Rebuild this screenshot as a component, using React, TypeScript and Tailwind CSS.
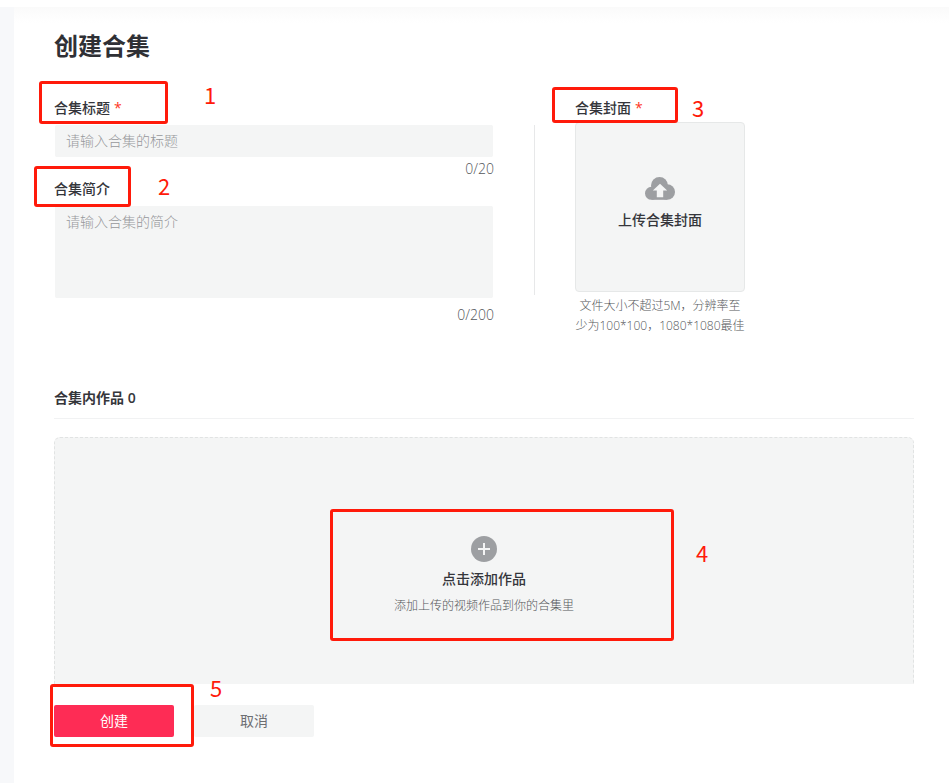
import React, { useState } from 'react';

const TITLE_MAX = 20;
const INTRO_MAX = 200;

function CloudUploadIcon() {
  return (
    <svg width="30" height="23" viewBox="0 0 30 23" aria-hidden="true">
      <g fill="#9d9fa2">
        <circle cx="6.5" cy="16.3" r="6.5" />
        <circle cx="14.5" cy="8.6" r="8.5" />
        <circle cx="22.2" cy="15" r="7.8" />
        <rect x="6.5" y="10" width="15.7" height="12.8" />
      </g>
      <path d="M15 6.8L22.2 13.4H18.2V20.3H11.8V13.4H7.8Z" fill="#f4f5f5" />
    </svg>
  );
}

function PlusCircleIcon() {
  return (
    <svg width="26" height="26" viewBox="0 0 26 26" aria-hidden="true">
      <circle cx="13" cy="13" r="13" fill="#9d9fa2" />
      <path d="M13 7V19M7 13H19" stroke="#f4f5f5" strokeWidth="2" />
    </svg>
  );
}

// Red frame of a guide step with its number, laid over the thing it points at
function Step({ n, frame, number }: { n: number; frame: string; number: string }) {
  return (
    <>
      <span className={`pointer-events-none absolute rounded-[3px] border-3 border-[#ff1a0a] ${frame}`} />
      <span
        className={`pointer-events-none absolute font-['Noto_Sans_CJK_SC',sans-serif] text-[22px] leading-5 font-normal text-[#ff1a0a] ${number}`}
      >
        {n}
      </span>
    </>
  );
}

function Required() {
  return <span className="ml-1 font-normal text-[#fe3824]">*</span>;
}

export default function App() {
  const [title, setTitle] = useState('');
  const [intro, setIntro] = useState('');

  return (
    <div className="flex min-h-screen flex-col bg-[#f7f8fa] pt-[7px] font-['Open_Sans','Noto_Sans_CJK_SC',sans-serif] text-sm leading-5 text-[#35363b] shadow-[inset_0_7px_0_white]">
      <main className="ml-3.5 flex grow flex-col bg-white bg-linear-to-b from-[#fafafa] to-white to-[16px] pt-[21px] pr-[35px] pb-10 pl-10">
        <h1 className="pb-[34px] text-2xl leading-9 font-bold text-[#2f3035]">创建合集</h1>

        <div className="flex gap-10">
          <div className="flex w-[440px] flex-col">
            <div className="flex flex-col gap-[7px]">
              <div className="relative">
                <label htmlFor="title" className="block font-medium">
                  合集标题
                  <Required />
                </label>
                <Step n={1} frame="-top-[17px] -left-[15px] h-[43px] w-[129px]" number="-top-3.5 left-[150px]" />
              </div>
              <input
                id="title"
                type="text"
                maxLength={TITLE_MAX}
                value={title}
                onChange={(e) => setTitle(e.target.value)}
                placeholder="请输入合集的标题"
                className="h-8 w-full rounded-xs border-x border-white bg-[#f4f5f5] bg-clip-padding px-[11px] pb-0.5 font-light outline-none placeholder:text-[#97989b]"
              />
            </div>
            <p className="pt-0.5 text-right font-light text-[#55575b]">
              {title.length}/{TITLE_MAX}
            </p>

            <div className="flex flex-col gap-[7px]">
              <div className="relative">
                <label htmlFor="intro" className="block font-medium">
                  合集简介
                </label>
                <Step n={2} frame="-top-[13px] -left-5 h-[41px] w-[97px]" number="-top-1 left-[104px]" />
              </div>
              <textarea
                id="intro"
                maxLength={INTRO_MAX}
                value={intro}
                onChange={(e) => setIntro(e.target.value)}
                placeholder="请输入合集的简介"
                className="h-[92px] w-full resize-none rounded-xs border-x border-white bg-[#f4f5f5] bg-clip-padding px-[11px] py-1.5 font-light outline-none placeholder:text-[#97989b]"
              />
              <p className="text-right font-light text-[#55575b]">
                {intro.length}/{INTRO_MAX}
              </p>
            </div>
          </div>

          <div className="mt-[27px] h-[170px] w-px bg-[#e7e8e9]" />

          <div className="flex w-[170px] flex-col gap-1">
            <div className="relative z-10">
              <label htmlFor="cover" className="block font-medium">
                合集封面
                <Required />
              </label>
              <Step n={3} frame="-top-[11px] -left-[23px] h-9 w-[126px]" number="-top-px left-[117px]" />
            </div>
            <label
              htmlFor="cover"
              className="flex h-[170px] cursor-pointer flex-col items-center justify-center gap-2.5 rounded-sm border border-[#e6e8e8] bg-[#f4f5f5] pb-2 font-medium"
            >
              <CloudUploadIcon />
              上传合集封面
            </label>
            <input id="cover" type="file" accept="image/*" className="sr-only" />
            <p className="text-center text-xs leading-5 font-light text-[#55575b]">
              文件大小不超过5M，分辨率至
              <br />
              少为100*100，1080*1080最佳
            </p>
          </div>
        </div>

        <section className="flex flex-col gap-[18px] pt-[52px]">
          <h2 className="border-b border-[#f1f2f3] pb-2.5 font-semibold">合集内作品 0</h2>
          <div className="flex h-[247px] items-start justify-center rounded-t-md border border-b-0 border-dashed border-[#e1e3e3] bg-[#f4f5f5] pt-[98px]">
            <button type="button" className="relative flex cursor-pointer flex-col items-center gap-[7px]">
              <PlusCircleIcon />
              <span className="font-medium">点击添加作品</span>
              <span className="text-xs leading-5 font-light text-[#55575b]">添加上传的视频作品到你的合集里</span>
              <Step n={4} frame="-top-[27px] -left-16 h-[132px] w-[344px]" number="top-1.5 left-[302px]" />
            </button>
          </div>
        </section>

        <div className="pt-[21px]">
          <div className="relative flex gap-5">
            <button type="button" className="h-8 w-[120px] cursor-pointer rounded-xs bg-[#fe2c55] text-white">
              创建
            </button>
            <button type="button" className="h-8 w-[120px] cursor-pointer rounded-xs bg-[#f4f5f5] text-[#6c6e72]">
              取消
            </button>
            <Step n={5} frame="-top-[21px] -left-1 h-[63px] w-36" number="-top-7 left-[156px]" />
          </div>
        </div>
      </main>
    </div>
  );
}
